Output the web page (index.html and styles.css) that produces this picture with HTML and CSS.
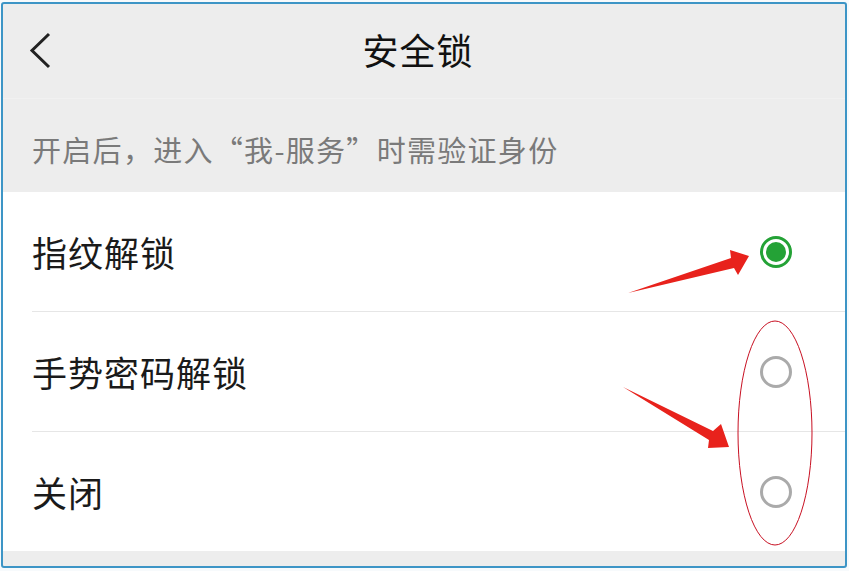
FILE: index.html
```html
<!DOCTYPE html>
<html lang="zh-CN">
<head>
<meta charset="utf-8">
	<title>安全锁</title>
	<link rel="stylesheet" href="styles.css">
</head>
<body>
	<div class="frame">
		<div class="header">
			<svg class="back" width="24" height="40" viewBox="0 0 24 40">
				<polyline points="20,3 3,19.5 20,36" fill="none" stroke="#222" stroke-width="3"/>
			</svg>
			<div class="title">安全锁</div>
		</div>
		<div class="tip">开启后，进入“我-服务”时需验证身份</div>
		<div class="list">
			<div class="row">
				<span class="label">指纹解锁</span>
				<span class="radio checked"></span>
			</div>
			<div class="row">
				<span class="label">手势密码解锁</span>
				<span class="radio"></span>
			</div>
			<div class="row">
				<span class="label">关闭</span>
				<span class="radio"></span>
			</div>
		</div>
		<div class="footer"></div>
	</div>
	<!-- 标注：箭头与圈 -->
	<svg class="marks" width="849" height="571" viewBox="0 0 849 571">
		<polygon points="628,293 731,258 730,250 749,256 738,275 734,268" fill="#e8221c"/>
		<polygon points="623,387 713,431 721,424 729,447 708,448 709,440" fill="#e8221c"/>
		<ellipse cx="775" cy="433" rx="37" ry="112" fill="none" stroke="#c81022" stroke-width="1"/>
	</svg>
</body>
</html>
```
FILE: styles.css
```css
body{
	margin: 0px;
	padding: 0px;
	background-color: #f7fafc;
	font-family: "Noto Sans CJK SC", "Noto Sans", sans-serif;
}
.frame{
	width: 842px;
	height: 562px;
	margin: 2px 0 0 1px;
	border: 2px solid #3d95c6;
	border-radius: 3px;
	background-color: #ededed;
	overflow: hidden;
	display: flex;
	flex-direction: column;
}
.header{
	height: 94px;
	display: flex;
	align-items: center;
	justify-content: center;
	position: relative;
	border-bottom: 1px solid #f1f1f1;
}
.back{
	position: absolute;
	left: 26px;
	top: 27px;
}
.title{
	font-size: 36px;
	color: #111;
	font-weight: 400;
	letter-spacing: 1px;
	margin: -4px 12px 0 0;
}
.tip{
	height: 93px;
	display: flex;
	align-items: center;
	padding-left: 29px;
	font-size: 29px;
	letter-spacing: 1.3px;
	color: #7a7a7a;
	padding-top: 6px;
	box-sizing: border-box;
}
.list{
	background-color: #fff;
}
.row{
	height: 120px;
	margin-left: 29px;
	padding-right: 53px;
	display: flex;
	align-items: center;
	justify-content: space-between;
	border-top: 1px solid #e6e6e6;
	box-sizing: border-box;
}
.row:first-child{
	border-top: none;
	height: 119px;
}
.label{
	font-size: 35px;
	color: #1a1a1a;
	letter-spacing: 1px;
}
.radio{
	width: 26px;
	height: 26px;
	border: 3px solid #aaa;
	border-radius: 50%;
	box-sizing: content-box;
	position: relative;
}
.radio.checked{
	border-color: #24a236;
}
.radio.checked::after{
	content: "";
	position: absolute;
	left: 3px;
	top: 3px;
	width: 20px;
	height: 20px;
	border-radius: 50%;
	background-color: #24a236;
}
.footer{
	flex: 1;
}
.marks{
	position: absolute;
	left: 0;
	top: 0;
	pointer-events: none;
}
```
